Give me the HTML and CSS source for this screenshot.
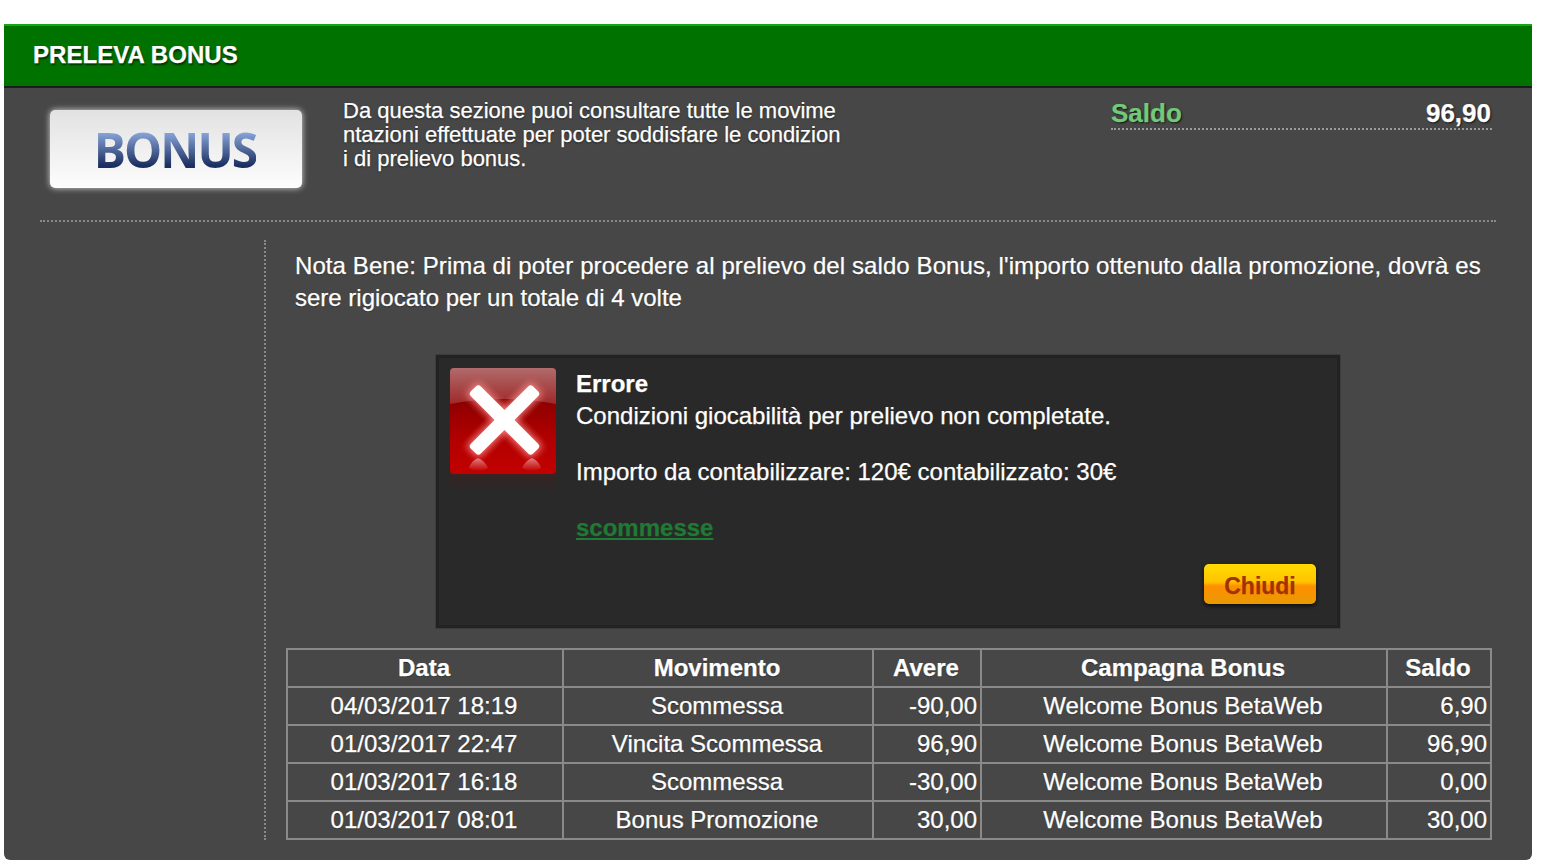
FILE: index.html
```html
<!DOCTYPE html>
<html lang="it">
<head>
<meta charset="utf-8">
<title>Preleva Bonus</title>
<link rel="stylesheet" href="styles.css">
</head>
<body>
<main class="panel">
  <header class="panel-head"><h1>PRELEVA BONUS</h1></header>
  <section class="intro">
    <div class="logo-card"><span class="logo-text">BONUS</span></div>
    <p class="intro-text">Da questa sezione puoi consultare tutte le movime<br>ntazioni effettuate per poter soddisfare le condizion<br>i di prelievo bonus.</p>
    <div class="balance"><span class="balance-label">Saldo</span><span class="balance-value">96,90</span></div>
  </section>
  <section class="content">
    <div class="rail"></div>
    <div class="main-col">
      <p class="note">Nota Bene: Prima di poter procedere al prelievo del saldo Bonus, l'importo ottenuto dalla promozione, dovrà es<br>sere rigiocato per un totale di 4 volte</p>
      <div class="dialog">
        <div class="error-icon">
          <svg viewBox="0 0 106 106" width="106" height="106" aria-hidden="true">
            <defs>
              <linearGradient id="sq" x1="0" y1="0" x2="0" y2="1">
                <stop offset="0" stop-color="#7a0000"/>
                <stop offset="0.3" stop-color="#8c0000"/>
                <stop offset="0.65" stop-color="#b00000"/>
                <stop offset="1" stop-color="#c40000"/>
              </linearGradient>
              <linearGradient id="gloss" x1="0" y1="0" x2="0" y2="1">
                <stop offset="0" stop-color="#fff" stop-opacity=".42"/>
                <stop offset="1" stop-color="#fff" stop-opacity=".16"/>
              </linearGradient>
              <linearGradient id="refl" x1="0" y1="0" x2="0" y2="1">
                <stop offset="0" stop-color="#f0b0b0" stop-opacity=".7"/>
                <stop offset="1" stop-color="#f0b0b0" stop-opacity="0"/>
              </linearGradient>
              <filter id="glow" x="-30%" y="-30%" width="160%" height="160%"><feGaussianBlur stdDeviation="3.5"/></filter>
            </defs>
            <rect width="106" height="106" rx="4" fill="url(#sq)"/>
            <path d="M0 4 Q0 0 4 0 H102 Q106 0 106 4 V36 Q53 26 0 36 Z" fill="url(#gloss)"/>
            <path d="M28 90 Q21 93 19 100 Q28 106 38 100 Q35 93 28 90 Z" fill="url(#refl)"/>
            <path d="M82 90 Q75 93 72 100 Q82 106 91 100 Q89 93 82 90 Z" fill="url(#refl)"/>
            <g transform="rotate(45 54.5 52)">
              <rect x="8.5" y="43" width="92" height="18" rx="4" fill="#ff8a8a" opacity=".85" filter="url(#glow)"/>
              <rect x="45.5" y="6" width="18" height="92" rx="4" fill="#ff8a8a" opacity=".85" filter="url(#glow)"/>
              <rect x="10.5" y="45" width="88" height="14" rx="3.5" fill="#fff"/>
              <rect x="47.5" y="8" width="14" height="88" rx="3.5" fill="#fff"/>
            </g>
          </svg>
          <div class="icon-shadow"></div>
        </div>
        <div class="dialog-body">
          <div class="dialog-title">Errore</div>
          <div>Condizioni giocabilità per prelievo non completate.</div>
          <div class="dialog-line">Importo da contabilizzare: 120€ contabilizzato: 30€</div>
          <a class="dialog-link" href="#">scommesse</a>
          <div class="dialog-actions"><button class="close-btn" type="button">Chiudi</button></div>
        </div>
      </div>
      <table class="moves">
        <colgroup><col class="c1"><col class="c2"><col class="c3"><col class="c4"><col class="c5"></colgroup>
        <thead><tr><th>Data</th><th>Movimento</th><th>Avere</th><th>Campagna Bonus</th><th>Saldo</th></tr></thead>
        <tbody>
          <tr><td>04/03/2017 18:19</td><td>Scommessa</td><td class="num">-90,00</td><td>Welcome Bonus BetaWeb</td><td class="num">6,90</td></tr>
          <tr><td>01/03/2017 22:47</td><td>Vincita Scommessa</td><td class="num">96,90</td><td>Welcome Bonus BetaWeb</td><td class="num">96,90</td></tr>
          <tr><td>01/03/2017 16:18</td><td>Scommessa</td><td class="num">-30,00</td><td>Welcome Bonus BetaWeb</td><td class="num">0,00</td></tr>
          <tr><td>01/03/2017 08:01</td><td>Bonus Promozione</td><td class="num">30,00</td><td>Welcome Bonus BetaWeb</td><td class="num">30,00</td></tr>
        </tbody>
      </table>
    </div>
  </section>
</main>
</body>
</html>
```

FILE: styles.css
```css
* { box-sizing: border-box; }
html, body { height: 100%; }
body {
  margin: 0;
  padding: 24px 12px 8px 4px;
  background: #fff;
  overflow: hidden;
  font-family: "Liberation Sans", Arial, sans-serif;
  color: #fff;
  -webkit-text-stroke: .25px currentColor;
}
.panel {
  height: 836px;
  background: #474747;
  border-radius: 0 0 6px 6px;
  overflow: hidden;
}
.panel-head {
  height: 64px;
  background: #007200;
  border-top: 2px solid #12a812;
  border-bottom: 2px solid #1c1c1c;
  padding: 0 0 2px 29px;
  display: flex;
  align-items: center;
}
.panel-head h1 {
  margin: 0;
  font-size: 24px;
  font-weight: 700;
  letter-spacing: .06px;
  text-shadow: 1px 2px 2px rgba(0,0,0,.6);
}
.intro {
  margin: 0 36px;
  height: 134px;
  padding: 10px 4px 0 10px;
  display: flex;
  border-bottom: 2px dotted #8a8a8a;
}
.logo-card {
  width: 252px;
  height: 78px;
  margin-top: 12px;
  border-radius: 5px;
  background: linear-gradient(#e2e2e2, #fdfdfd);
  box-shadow: 0 0 6px rgba(255,255,255,.8);
  display: flex;
  align-items: center;
  justify-content: center;
  -webkit-text-stroke: 0;
}
.logo-text {
  font-family: "Open Sans", "Liberation Sans", sans-serif;
  font-size: 48px;
  font-weight: 700;
  letter-spacing: -1.9px;
  line-height: 60px;
  margin: 2px 2px 0 0;
  background: linear-gradient(#86a2d6 22%, #1b2f60 76%);
  -webkit-background-clip: text;
  background-clip: text;
  color: transparent;
  filter: blur(.4px);
}
.intro-text {
  margin: 1px 0 0 41px;
  width: 768px;
  font-size: 22px;
  line-height: 24px;
  text-shadow: 0 1px 2px rgba(0,0,0,.6);
}
.balance {
  width: 381px;
  height: 32px;
  display: flex;
  justify-content: space-between;
  align-items: center;
  border-bottom: 2px dotted #9a9a9a;
  padding-right: 1px;
  font-size: 26px;
  font-weight: 700;
  text-shadow: 1px 1px 2px rgba(0,0,0,.8);
}
.balance-label { color: #72c97a; }
.balance-value { color: #fff; }
.content {
  display: flex;
  margin: 18px 0 0 260px;
}
.rail {
  width: 2px;
  height: 600px;
  border-left: 2px dotted #8a8a8a;
}
.main-col { width: 1225px; }
.note {
  margin: 10px 0 0 29px;
  font-size: 24px;
  line-height: 32px;
  text-shadow: 0 1px 1px rgba(0,0,0,.4);
}
.note::first-line { letter-spacing: .09px; }
.dialog {
  margin: 41px 0 0 170px;
  width: 904px;
  height: 273px;
  display: flex;
  background: #292929;
  border: 3px solid #222;
  outline: 1px solid #3c3c3c;
  padding: 10px 21px 0 11px;
  font-size: 24px;
  line-height: 32px;
}
.error-icon { width: 106px; flex: none; position: relative; height: 106px; }
.error-icon svg { display: block; }
.icon-shadow {
  height: 18px;
  background: linear-gradient(rgba(150,0,0,.14), rgba(150,0,0,0));
}
.dialog-body { margin-left: 20px; flex: 1; }
.dialog-title { font-weight: 700; }
.dialog-line { margin-top: 24px; }
.dialog-link {
  display: inline-block;
  margin-top: 24px;
  color: #1f7a33;
  font-weight: 700;
  text-decoration: underline;
}
.dialog-actions {
  display: flex;
  justify-content: flex-end;
  margin-top: 20px;
}
.close-btn {
  width: 112px;
  height: 40px;
  padding: 4px 0 0;
  border: 0;
  border-radius: 5px;
  background: linear-gradient(#ffdc00 0%, #ffc400 45%, #ff8f00 55%, #e89a00 100%);
  box-shadow: 0 2px 4px rgba(0,0,0,.7);
  color: #a33200;
  -webkit-text-stroke: .25px #a33200;
  font: 700 23px "Liberation Sans", Arial, sans-serif;
}
.moves {
  margin: 20px 0 0 20px;
  width: 1204px;
  table-layout: fixed;
  border-collapse: collapse;
  border: 2px solid #8a8a8a;
  font-size: 24px;
}
.moves th, .moves td {
  height: 38px;
  padding: 0 5px 0 3px;
  border: 2px solid #8a8a8a;
  text-align: center;
  text-shadow: 0 1px 1px rgba(0,0,0,.4);
}
.moves td.num { text-align: right; padding: 0 3px; }
.c1 { width: 276px; }
.c2 { width: 310px; }
.c3 { width: 108px; }
.c4 { width: 406px; }
.c5 { width: 104px; }
```
